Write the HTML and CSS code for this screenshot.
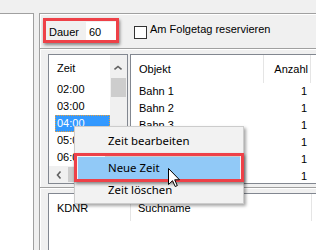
FILE: index.html
```html
<!DOCTYPE html>
<html lang="de">
<head>
    <meta charset="UTF-8">
    <meta name="viewport" content="width=device-width, initial-scale=1.0">
    <title>Zeiten</title>
    <link rel="stylesheet" href="styles.css">
</head>
<body>

<div class="window">
    <div class="side"></div>
    <div class="main">
        <div class="toolbar">
            <div class="dauer">
                <span class="dauer-label">Dauer</span>
                <span class="dauer-field">60</span>
            </div>
            <span class="checkbox"></span>
            <span class="check-label">Am Folgetag reservieren</span>
        </div>

        <div class="lists">
            <div class="list zeit">
                <div class="zeit-body">
                    <div class="zeit-head">Zeit</div>
                    <div class="zeit-row">02:00</div>
                    <div class="zeit-row">03:00</div>
                    <div class="zeit-row selected">04:00</div>
                    <div class="zeit-row">05:00</div>
                    <div class="zeit-row">06:00</div>
                    <div class="hscroll">
                        <span class="arrow-left">
                            <svg width="6" height="8" viewBox="0 0 6 8"><polyline points="4.5,0.5 1.5,4 4.5,7.5" fill="none" stroke="#606060" stroke-width="1.6"/></svg>
                        </span>
                        <span class="hthumb"></span>
                    </div>
                </div>
                <div class="vscroll">
                    <span class="arrow-up">
                        <svg width="8" height="6" viewBox="0 0 8 6"><polyline points="0.5,4.5 4,1.5 7.5,4.5" fill="none" stroke="#606060" stroke-width="1.6"/></svg>
                    </span>
                    <span class="vthumb"></span>
                </div>
            </div>

            <div class="list objekt">
                <div class="obj-head">
                    <span class="c-obj">Objekt</span>
                    <span class="c-anz">Anzahl</span>
                </div>
                <div class="obj-row"><span class="c-obj">Bahn 1</span><span class="c-anz">1</span></div>
                <div class="obj-row"><span class="c-obj">Bahn 2</span><span class="c-anz">1</span></div>
                <div class="obj-row"><span class="c-obj">Bahn 3</span><span class="c-anz">1</span></div>
                <div class="obj-row"><span class="c-obj">Bahn 4</span><span class="c-anz">1</span></div>
                <div class="obj-row"><span class="c-obj">Bahn 5</span><span class="c-anz">1</span></div>
                <div class="obj-row"><span class="c-obj">Bahn 6</span><span class="c-anz">1</span></div>
            </div>
        </div>

        <div class="bottom">
            <div class="list kunden">
                <div class="kd-head">
                    <span class="c-kdnr">KDNR</span>
                    <span class="c-such">Suchname</span>
                </div>
            </div>
        </div>
    </div>
</div>

<!-- Kontextmenü der Zeitliste -->
<div class="menu">
    <div class="menu-item">Zeit bearbeiten</div>
    <div class="menu-sep"></div>
    <div class="menu-item active">Neue Zeit</div>
    <div class="menu-item">Zeit löschen</div>
</div>
<div class="mark-menu"></div>

<svg class="cursor" width="12" height="19" viewBox="0 0 12 19">
    <path d="M0.5 0.5 V16.5 L4.5 12.7 L7.2 18.5 L9.3 17.6 L6.7 11.8 H11.5 Z" fill="#fff" stroke="#000" stroke-width="1" stroke-linejoin="miter"/>
</svg>

</body>
</html>
```

FILE: styles.css
```css
* {
    box-sizing: border-box;
}

body {
    margin: 0;
    width: 316px;
    height: 250px;
    overflow: hidden;
    position: relative;
    background-color: #f0f0f0;
    font-family: "Liberation Sans", Arial, sans-serif;
    font-size: 11px;
    color: #000;
}

.window {
    display: flex;
    height: 250px;
    padding-top: 13px;
}

.side {
    width: 34px;
    background-color: #fff;
    border-top: 1px solid #a0a0a0;
    border-right: 1px solid #a0a0a0;
}

.main {
    flex: 1;
    min-width: 0;
    margin-left: 5px;
    display: flex;
    flex-direction: column;
    border-left: 1px solid #a0a0a0;
    border-top: 1px solid #a0a0a0;
    box-shadow: inset 1px 1px #fff;
}

/* obere Leiste */
.toolbar {
    display: flex;
    align-items: flex-start;
    height: 35px;
    padding: 4px 0 0 3px;
    border-bottom: 1px solid #a0a0a0;
}

.dauer {
    display: flex;
    align-items: flex-start;
    width: 76px;
    height: 25px;
    border: 3px solid #ee4148;
    box-shadow: 1px 2px 3px rgba(0, 0, 0, 0.45);
}

.dauer-label {
    margin-top: 5px;
    padding-left: 3px;
    line-height: 13px;
}

.dauer-field {
    margin-left: auto;
    margin-top: 1px;
    width: 30px;
    height: 18px;
    padding: 4px 0 0 3px;
    line-height: 13px;
    background-color: #fff;
}

.checkbox {
    width: 13px;
    height: 13px;
    margin: 8px 0 0 15px;
    border: 1px solid #333;
    background-color: #fff;
}

.check-label {
    margin: 5px 0 0 3px;
    line-height: 13px;
    white-space: nowrap;
}

/* Listen */
.lists {
    display: flex;
    border-top: 1px solid #fff;
    border-bottom: 1px solid #a0a0a0;
    padding: 4px 0 3px 8px;
}

.list {
    background-color: #fff;
    border: 1px solid #828790;
    overflow: hidden;
}

.zeit {
    display: flex;
    width: 80px;
    height: 130px;
}

.zeit-body {
    width: 61px;
}

.zeit-head {
    height: 26px;
    padding: 7px 0 0 8px;
    line-height: 13px;
}

.zeit-row {
    height: 17px;
    margin-left: 6px;
    padding-left: 2px;
    line-height: 17px;
}

.zeit-row.selected {
    background-color: #3399ff;
    color: #fff;
    outline: 1px dotted #e9a13b;
    outline-offset: -1px;
}

.hscroll {
    display: flex;
    height: 17px;
    background-color: #f0f0f0;
}

.arrow-left {
    width: 17px;
    padding: 5px 0 0 7px;
}

.hthumb {
    width: 40px;
    height: 15px;
    margin: 1px 0 0 2px;
    background-color: #cdcdcd;
}

.vscroll {
    width: 17px;
    background-color: #f0f0f0;
}

.arrow-up {
    display: block;
    height: 17px;
    padding: 10px 0 0 4px;
}

.arrow-up svg,
.arrow-left svg {
    display: block;
}

.vthumb {
    display: block;
    height: 19px;
    margin: 6px 1px 0;
    background-color: #cdcdcd;
}

.objekt {
    flex: 1;
    height: 130px;
    margin-left: 2px;
    border-right: none;
}

.obj-head,
.obj-row,
.kd-head {
    display: flex;
    white-space: nowrap;
}

.obj-head {
    height: 28px;
    line-height: 13px;
}

.obj-head span {
    padding-top: 8px;
    border-right: 1px solid #e5e5e5;
}

.obj-row {
    height: 17px;
    line-height: 17px;
}

.c-obj {
    width: 133px;
    padding-left: 8px;
}

.c-anz {
    width: 47px;
    text-align: right;
    padding-right: 4px;
}

.obj-head .c-anz {
    padding-right: 2px;
}

/* untere Liste */
.bottom {
    flex: 1;
    border-top: 1px solid #fff;
    padding: 4px 0 0 8px;
}

.kunden {
    height: 100%;
    border-right: none;
    border-bottom: none;
}

.kd-head {
    height: 27px;
    line-height: 13px;
}

.kd-head span {
    padding-top: 8px;
    border-right: 1px solid #e5e5e5;
}

.c-kdnr {
    width: 82px;
    padding-left: 8px;
}

.c-such {
    width: 181px;
    padding-left: 7px;
}

/* Kontextmenü */
.menu {
    position: absolute;
    left: 74px;
    top: 126px;
    width: 170px;
    height: 78px;
    padding: 3px 3px 2px;
    background-color: #f2f2f2;
    border: 1px solid #cccccc;
    box-shadow: 2px 2px 3px rgba(0, 0, 0, 0.35);
    font-family: "Noto Sans", "Open Sans", sans-serif;
    font-size: 11.4px;
}

.menu-item {
    height: 22px;
    line-height: 22px;
    padding-left: 30px;
    white-space: nowrap;
}

.menu-item.active {
    background-color: #91c9f7;
}

.menu-sep {
    height: 5px;
    margin-left: 27px;
    border-bottom: 1px solid #ccc;
}

.mark-menu {
    position: absolute;
    left: 74px;
    top: 153px;
    width: 170px;
    height: 29px;
    border: 3px solid #ee4148;
    box-shadow: 1px 2px 3px rgba(0, 0, 0, 0.45);
}

.cursor {
    position: absolute;
    left: 168px;
    top: 168px;
}
```
